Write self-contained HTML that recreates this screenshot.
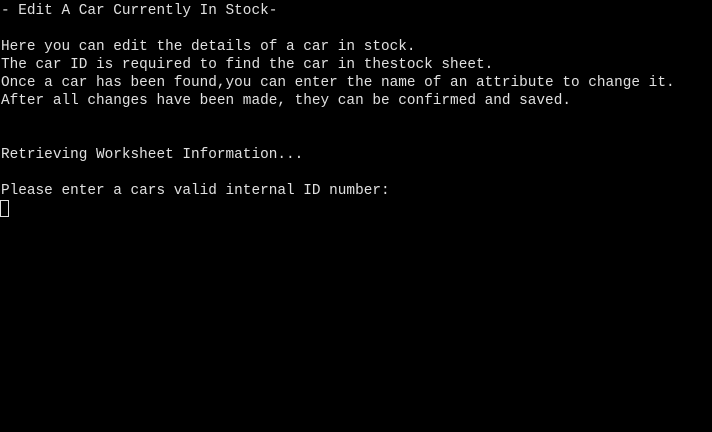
<!DOCTYPE html>
<html><head><style>
html,body{margin:0;padding:0;background:#000;width:712px;height:432px;overflow:hidden}
pre{margin:0;padding:2px 0 0 1px;font-family:"Liberation Mono",monospace;font-size:14.4px;line-height:18px;color:#e0e0e0}
.cur{display:inline-block;width:7px;height:15px;border:1px solid #e0e0e0;vertical-align:-4px;margin-left:-1px}
</style></head><body>
<pre>- Edit A Car Currently In Stock-

Here you can edit the details of a car in stock.
The car ID is required to find the car in thestock sheet.
Once a car has been found,you can enter the name of an attribute to change it.
After all changes have been made, they can be confirmed and saved.


Retrieving Worksheet Information...

Please enter a cars valid internal ID number:
<span class="cur"></span></pre>
</body></html>
